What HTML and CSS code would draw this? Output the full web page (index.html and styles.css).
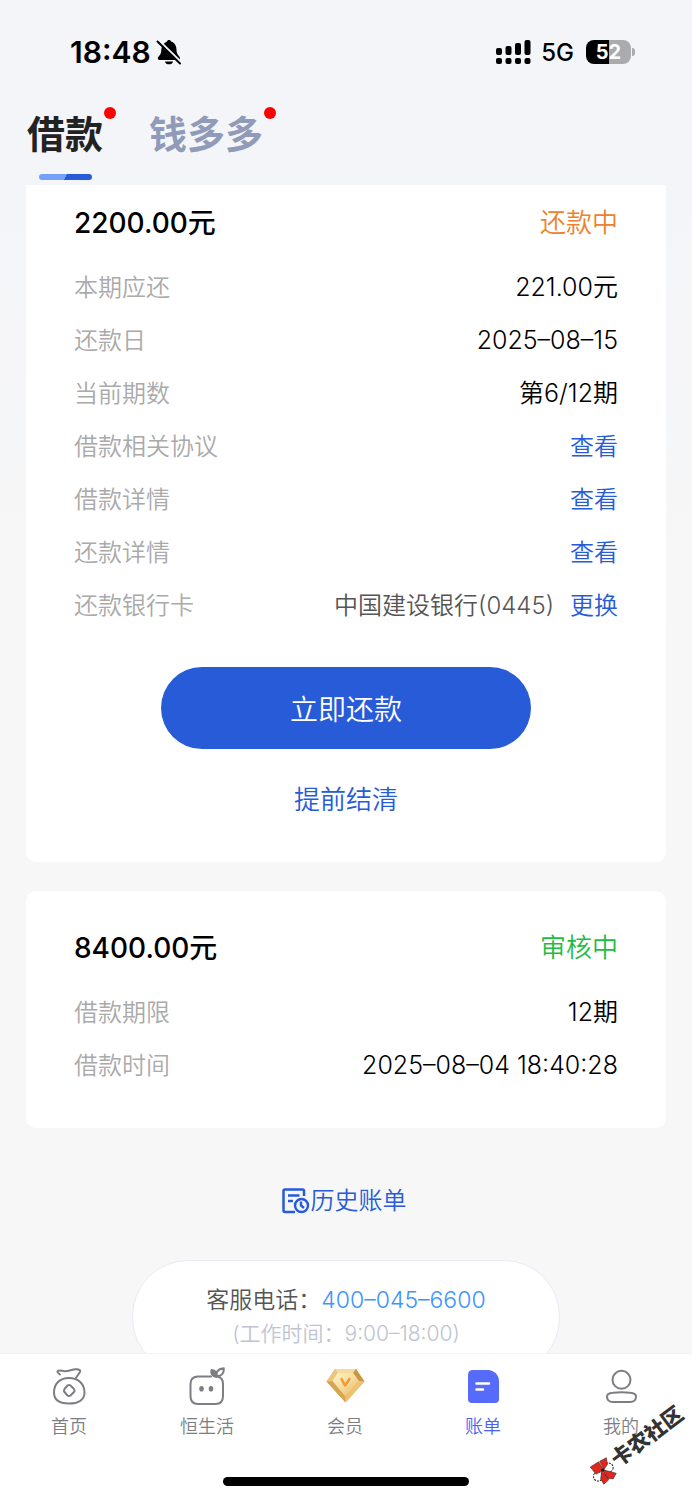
FILE: index.html
```html
<!DOCTYPE html>
<html lang="zh-CN">
<head>
<meta charset="utf-8">
<meta name="viewport" content="width=device-width, initial-scale=1">
<title>账单</title>
<link rel="stylesheet" href="styles.css">
</head>
<body>
<div class="app">
  <header class="header">
    <div class="status">
      <div class="status-side status-left">
        <time class="clock">18:48</time>
        <svg class="bell" viewBox="0 0 26 26" aria-hidden="true">
          <path d="M6 7.500C7 4.500 9.500 3 11 2.400C11.300.400 14.700.400 15 2.400C19 3.700 20.500 7 20.500 11C20.500 16 24 17 24 19.500Q24 21 22 21H3.500Q1.500 21 1.800 19C2.300 17 5.200 16.500 5.300 11Q5.400 9 6 7.500Z"/>
          <path d="M9 22.500H17C16.500 26.300 9.500 26.300 9 22.500Z"/>
          <path class="bell-gap" d="M2.500 1L25.500 23.500"/>
          <path class="bell-slash" d="M1.500 2.500L24 24.500"/>
        </svg>
      </div>
      <div class="status-side">
        <svg class="signal" viewBox="0 0 35 24" aria-hidden="true">
          <rect x="0" y="8" width="6" height="7" rx="2"/><rect x="9.500" y="6" width="6" height="9" rx="2"/><rect x="19" y="3" width="6" height="12" rx="2"/><rect x="28.500" y="0" width="6" height="15" rx="2"/>
          <rect x="0" y="18" width="6" height="6" rx="2"/><rect x="9.500" y="18" width="6" height="6" rx="2"/><rect x="19" y="18" width="6" height="6" rx="2"/><rect x="28.500" y="18" width="6" height="6" rx="2"/>
        </svg>
        <span class="network">5G</span>
        <span class="battery">52</span>
      </div>
    </div>
    <nav class="tabs">
      <a class="tab tab-active" href="#loan">借款</a>
      <a class="tab" href="#money">钱多多</a>
    </nav>
  </header>

  <main class="content">
    <section class="card card-first">
      <div class="card-head"><h2 class="amount">2200.00元</h2><span class="state state-repay">还款中</span></div>
      <dl class="rows">
        <div class="row"><dt>本期应还</dt><dd>221.00元</dd></div>
        <div class="row"><dt>还款日</dt><dd>2025–08–15</dd></div>
        <div class="row"><dt>当前期数</dt><dd>第6/12期</dd></div>
        <div class="row"><dt>借款相关协议</dt><dd><a class="link" href="#agreement">查看</a></dd></div>
        <div class="row"><dt>借款详情</dt><dd><a class="link" href="#loan-detail">查看</a></dd></div>
        <div class="row"><dt>还款详情</dt><dd><a class="link" href="#repay-detail">查看</a></dd></div>
        <div class="row"><dt>还款银行卡</dt><dd class="bank"><span>中国建设银行(0445)</span><a class="link" href="#change">更换</a></dd></div>
      </dl>
      <button class="pay" type="button">立即还款</button>
      <a class="link settle" href="#settle">提前结清</a>
    </section>

    <section class="card">
      <div class="card-head"><h2 class="amount">8400.00元</h2><span class="state state-review">审核中</span></div>
      <dl class="rows">
        <div class="row"><dt>借款期限</dt><dd>12期</dd></div>
        <div class="row"><dt>借款时间</dt><dd>2025–08–04 18:40:28</dd></div>
      </dl>
    </section>

    <a class="link history" href="#history">
      <svg class="history-icon" viewBox="0 0 28 26" aria-hidden="true">
        <path d="M13 24H3Q1.500 24 1.500 22.500V3Q1.500 1.500 3 1.500H20.500Q22 1.500 22 3V8M6 7.500H17.500M6 13H11"/>
        <circle cx="19.500" cy="17.500" r="6.500"/><path d="M19 13.500V17.500L22 20"/>
      </svg>
      <span>历史账单</span>
    </a>

    <div class="service">
      <p class="phone">客服电话：<a class="phone-number" href="tel:4000456600">400–045–6600</a></p>
      <p class="hours">(工作时间：9:00–18:00)</p>
    </div>
  </main>

  <footer class="footer">
    <nav class="nav">
      <a class="nav-item" href="#home">
        <svg class="nav-icon" viewBox="0 0 40 40" aria-hidden="true">
          <path d="M20 11C10 11 5 17.500 5 25.500C5 33 11 36.500 20 36.500S35.500 33 35.500 25.500C35.500 17.500 30 11 20 11Z"/>
          <path d="M11 7.500C6.500 4.500 8.500 3 13 3.800C19 5.500 23 1.500 28 2.300C32.500 3 31.500 4.500 30 6.500L26.500 11.500"/>
          <path d="M18.500 18.500Q20 17.500 21.500 18.500L25 22Q26 23.500 25 25L21.500 28.500Q20 29.500 18.500 28.500L15.500 25Q14.500 23.500 15.500 22Z"/>
        </svg>
        <span>首页</span>
      </a>
      <a class="nav-item" href="#life">
        <svg class="nav-icon" viewBox="0 0 40 40" aria-hidden="true">
          <path d="M24 9.500H11Q3.500 9.500 3.500 17V29Q3.500 37 11 37H28.500Q36 37 36 29V17Q36 11 31 9.800"/>
          <path d="M29.500 9C28.500 5 31.500 1.500 36.800 1.200C37.300 6 34.500 9.500 29.500 9Z"/>
          <path class="nav-fill" d="M29.500 10C24.500 9 24 5.500 24.500 3C28 3.500 30.500 5.500 29.500 10Z"/>
          <ellipse class="nav-fill" cx="14.500" cy="21.800" rx="1.300" ry="1.800"/><ellipse class="nav-fill" cx="24" cy="21.800" rx="1.300" ry="1.800"/>
        </svg>
        <span>恒生活</span>
      </a>
      <a class="nav-item" href="#member">
        <svg class="nav-icon" viewBox="0 0 40 40" aria-hidden="true">
          <defs><linearGradient id="gold" x1="0" y1="0" x2="1" y2="1"><stop offset="0" stop-color="#fff2c4"/><stop offset=".5" stop-color="#f5dca0"/><stop offset="1" stop-color="#f3ad44"/></linearGradient></defs>
          <g stroke="none">
            <path fill="#dfb765" d="M10 2H31L39.500 14.500L20.500 35.500L1.500 14.500Z"/>
            <path fill="#f4dc9f" d="M10 2H31L28 6H12.500Z"/>
            <path fill="#e9c77f" d="M1.500 14.500L10 2L12.500 6L7.500 14Z"/>
            <path fill="#c99645" d="M39.500 14.500L31 2L28 6L34 14Z"/>
            <path fill="#d6a653" d="M1.500 14.500L7.500 14L20.500 30V35.500Z"/>
            <path fill="#edc272" d="M39.500 14.500L34 14L20.500 30V35.500Z"/>
            <path fill="url(#gold)" d="M12.500 6H28L34 14L20.500 29.500L7.500 14Z"/>
          </g>
          <path fill="none" stroke="#ed9c31" stroke-width="2.500" d="M16.500 12L20 18.500L24.500 12"/>
        </svg>
        <span>会员</span>
      </a>
      <a class="nav-item nav-current" href="#bill" aria-current="page">
        <svg class="nav-icon" viewBox="0 0 40 40" aria-hidden="true">
          <path fill="#576bfa" stroke="none" d="M10 3H25C31 3 36 8 36 14V32Q36 36 32 36H9Q5 36 5 32V8Q5 3 10 3Z"/>
          <path stroke="#fff" stroke-width="2.500" d="M13.500 16.500H26M13.500 22.500H20"/>
        </svg>
        <span>账单</span>
      </a>
      <a class="nav-item" href="#mine">
        <svg class="nav-icon" viewBox="0 0 40 40" aria-hidden="true">
          <circle cx="20.500" cy="12.800" r="9"/>
          <path d="M12 25.800Q20.500 24.500 29 25.800C33.500 26.200 35 27 35 29.500C35 33.500 33 35 29 35H12C8 35 6 33.500 6 29.500C6 27 7.500 26.200 12 25.800Z"/>
        </svg>
        <span>我的</span>
      </a>
    </nav>
    <div class="home-bar"></div>
    <div class="watermark">
      <svg class="watermark-icon" viewBox="0 0 26 26" aria-hidden="true">
        <g transform="rotate(37 13 13)">
          <g fill="#fff" stroke="#222" stroke-dasharray="2 1"><circle cx="18" cy="10" r="4.500"/><circle cx="8" cy="18.500" r="4.500"/></g>
          <g fill="#e0261d" stroke="#222" stroke-width=".5">
            <path d="M.5 9.500L8.500 4.500L13 12L6 16.500Z"/>
            <path d="M9.500 4L16 .5L17 7L13.500 12Z"/>
            <path d="M12.500 12L25.500 15.500L22.500 21L16 20Z"/>
            <path d="M11.500 13L18.500 21.500L13.500 26L10.500 21Z"/>
          </g>
          <circle cx="12.500" cy="12.500" r="1.500" fill="#222"/>
        </g>
      </svg>
      <span>卡农社区</span>
    </div>
  </footer>
</div>
</body>
</html>
```
FILE: styles.css
```css
* {
  box-sizing: border-box;
}

body {
  margin: 0;
  color: #000;
  font-family: Inter, "Noto Sans CJK SC", sans-serif;
  font-size: 24px;
  font-weight: 350;
}

a {
  color: inherit;
  text-decoration: none;
}

h2,
p,
dl,
dd {
  margin: 0;
}

.app {
  display: flex;
  flex-direction: column;
  height: 100vh;
  background: linear-gradient(#f4f5f8 0, #f4f5f8 185px, #f7f7f7 640px);
}

/* Status bar and tabs */
.header {
  flex: none;
  height: 185px;
}

.status {
  display: flex;
  justify-content: space-between;
  height: 104px;
  padding: 0 61px 0 70px;
}

.status-side {
  display: flex;
  align-items: center;
  gap: 8px;
}

.status-left {
  gap: 5px;
}

.clock {
  font-size: 30px;
  font-weight: 600;
}

.bell {
  width: 26px;
  height: 26px;
}

.bell-gap,
.bell-slash {
  fill: none;
  stroke: #f4f5f8;
  stroke-width: 2;
}

.bell-slash {
  stroke: #000;
  stroke-linecap: round;
}

.signal {
  width: 35px;
  height: 24px;
}

.network {
  margin: 0 4px 0 2px;
  font-weight: 500;
}

.battery {
  position: relative;
  width: 45px;
  border-radius: 8px;
  background: linear-gradient(90deg, #000 52%, #aaabad 52%);
  color: #fff;
  font-size: 20px;
  font-weight: 700;
  line-height: 24px;
  text-align: center;
}

.battery::after {
  content: "";
  position: absolute;
  top: 8px;
  right: -4px;
  width: 3px;
  height: 8px;
  border-radius: 0 4px 4px 0;
  background: #aaabad;
}

.tabs {
  display: flex;
  gap: 46px;
  padding-left: 27px;
}

.tab {
  position: relative;
  height: 76px;
  color: #909bb9;
  font-size: 38px;
  font-weight: 700;
  line-height: 60px;
}

.tab::before {
  content: "";
  position: absolute;
  top: 3px;
  right: -13px;
  width: 12px;
  height: 12px;
  border-radius: 50%;
  background: #f00;
}

.tab-active {
  color: #222;
}

.tab-active::after {
  content: "";
  position: absolute;
  bottom: 0;
  left: 12px;
  width: 53px;
  height: 6px;
  border-radius: 3px;
  background: linear-gradient(120deg, #76a1fb 50%, #285bd8 50%);
}

/* Bills */
.content {
  flex: 1;
  min-height: 0;
  overflow: hidden;
  padding: 0 26px;
}

.card {
  display: flex;
  flex-direction: column;
  margin-bottom: 29px;
  padding: 33px 48px 36px;
  border-radius: 10px;
  background: #fff;
}

.card-first {
  padding-top: 14px;
  border-radius: 0 0 10px 10px;
}

.card-head,
.row {
  display: flex;
  justify-content: space-between;
}

.card-head {
  margin-bottom: 14px;
  line-height: 48px;
}

.amount {
  font-size: 28px;
  font-weight: 500;
}

.state {
  font-size: 26px;
}

.state-repay {
  color: #ee812d;
}

.state-review {
  color: #1fbc43;
}

.row {
  line-height: 53px;
}

dt {
  color: #aaa;
}

dd {
  font-size: 25px;
}

dd .link,
.bank {
  font-size: 24px;
}

.bank {
  display: flex;
  gap: 16px;
  color: #555;
}

.link {
  color: #285bd8;
}

.pay {
  align-self: center;
  width: 68%;
  height: 82px;
  margin: 35px 0 26px;
  border: 0;
  border-radius: 41px;
  background: #285bd8;
  color: #fff;
  font: inherit;
  font-size: 28px;
}

.settle {
  align-self: center;
  margin-bottom: 1px;
  font-size: 26px;
  line-height: 50px;
}

.history {
  display: flex;
  align-items: center;
  justify-content: center;
  gap: 1px;
  margin: 48px 0 34px;
  padding-right: 4px;
  line-height: 50px;
}

.history-icon {
  width: 28px;
  height: 26px;
  fill: none;
  stroke: #285bd8;
  stroke-width: 2.5;
}

.service {
  width: 67%;
  margin: 0 auto;
  padding: 23px 0;
  border: 1px solid #e8ebf5;
  border-radius: 56px;
  background: #fff;
  color: #555;
  font-size: 23px;
  line-height: 33px;
  text-align: center;
}

.phone-number {
  color: #4094fb;
}

.hours {
  color: #c0c4d2;
  font-size: 21px;
}

/* Bottom navigation */
.footer {
  position: relative;
  flex: none;
  height: 147px;
  border-top: 1px solid #f2f2f5;
  background: #fff;
}

.nav {
  display: grid;
  grid-template-columns: repeat(5, 1fr);
  padding: 13px 2px 0 0;
}

.nav-item {
  display: flex;
  flex-direction: column;
  align-items: center;
  gap: 6px;
  color: #7d7e83;
  font-size: 18px;
  line-height: 28px;
}

.nav-current {
  color: #4a61f7;
}

.nav-icon {
  width: 40px;
  height: 40px;
  fill: none;
  stroke: #7d7e83;
  stroke-width: 2;
  stroke-linecap: round;
  stroke-linejoin: round;
}

.nav-fill {
  fill: #7d7e83;
}

.home-bar {
  position: absolute;
  bottom: 14px;
  left: 50%;
  width: 246px;
  height: 9px;
  margin-left: -123px;
  border-radius: 5px;
  background: #000;
}

.watermark {
  position: absolute;
  right: 0;
  bottom: 41px;
  display: flex;
  align-items: center;
  color: #333;
  font-size: 21px;
  font-weight: 900;
  line-height: 28px;
  transform: rotate(-37deg);
}

.watermark-icon {
  width: 27px;
  height: 27px;
}
```
